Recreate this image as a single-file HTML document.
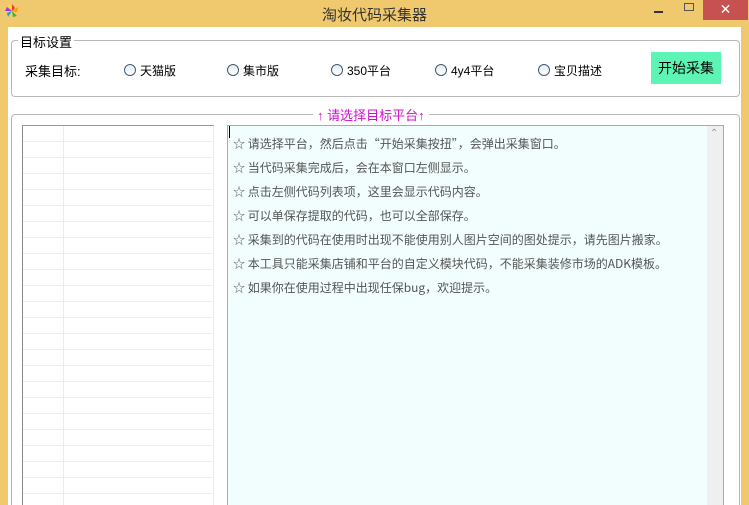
<!DOCTYPE html>
<html><head><meta charset="utf-8"><style>
*{margin:0;padding:0;box-sizing:border-box}
html,body{width:749px;height:505px;overflow:hidden}
body{background:#f0c86e;font-family:"Liberation Sans","Noto Sans CJK SC",sans-serif;font-size:13px;color:#000;position:relative}
.a{position:absolute}
.client{left:8px;top:27px;width:733px;height:478px;background:#fff}
.grp{border:1px solid #b8b8b8;border-radius:4px}
.radio{width:12px;height:12px;border:1px solid #3c5a78;border-radius:50%;background:linear-gradient(#e8ecef,#fff)}
.rl{font-size:12px;top:62px}
.row{left:23px;width:190px;height:1px;background:#ececec}
.tl{left:233px;font-size:12px;color:#555;font-family:"Noto Sans CJK SC","Liberation Sans",sans-serif;line-height:16px;white-space:nowrap}
</style></head><body>
<div class="a" style="left:4px;top:3px;width:16px;height:16px">
<svg width="16" height="16" viewBox="0 0 16 16"><path d="M8 8L8 1 11 5z" fill="#e33"/><path d="M8 8L14 4 13 9z" fill="#f90"/><path d="M8 8L13 13 9 14z" fill="#3b3"/><path d="M8 8L4 14 3 10z" fill="#29d"/><path d="M8 8L1 8 3 4z" fill="#a3d"/><path d="M8 8L3 2 7 2z" fill="#fd2"/></svg></div>
<div class="a" style="left:0;top:4px;width:749px;text-align:center;font-size:15px;color:#333">淘妆代码采集器</div>
<div class="a" style="left:654px;top:11px;width:9px;height:2px;background:#333"></div>
<div class="a" style="left:684px;top:3px;width:10px;height:8px;border:1px solid #555"></div>
<div class="a" style="left:703px;top:0;width:45px;height:20px;background:#c75050;color:#fff;text-align:center;font-size:14px;line-height:19px">✕</div>
<div class="a client"></div>
<div class="a grp" style="left:11px;top:40px;width:729px;height:57px"></div>
<div class="a" style="left:18px;top:32px;background:#fff;padding:0 2px;font-size:13px">目标设置</div>
<div class="a" style="left:25px;top:61px;font-size:13px">采集目标:</div>
<div class="a radio" style="left:124px;top:64px"></div><div class="a rl" style="left:140px">天猫版</div>
<div class="a radio" style="left:227px;top:64px"></div><div class="a rl" style="left:243px">集市版</div>
<div class="a radio" style="left:331px;top:64px"></div><div class="a rl" style="left:347px">350平台</div>
<div class="a radio" style="left:435px;top:64px"></div><div class="a rl" style="left:451px">4y4平台</div>
<div class="a radio" style="left:538px;top:64px"></div><div class="a rl" style="left:554px">宝贝描述</div>
<div class="a" style="left:651px;top:52px;width:70px;height:32px;background:#5cf5b5;font-size:14px;line-height:32px;text-align:center">开始采集</div>
<div class="a grp" style="left:11px;top:114px;width:729px;height:400px"></div>
<div class="a" style="left:313px;top:105px;background:#fff;padding:0 4px;color:#d010d0;font-size:13px">↑ 请选择目标平台↑</div>
<div class="a" style="left:22px;top:125px;width:192px;height:380px;border-left:1px solid #8a8a8a;border-top:1px solid #9a9a9a;background:#fff"></div>
<div class="a" style="left:63px;top:126px;width:1px;height:379px;background:#ececec"></div>
<div class="a" style="left:213px;top:126px;width:1px;height:379px;background:#ececec"></div>
<div class="a row" style="top:141px"></div><div class="a row" style="top:157px"></div><div class="a row" style="top:173px"></div><div class="a row" style="top:189px"></div><div class="a row" style="top:205px"></div><div class="a row" style="top:221px"></div><div class="a row" style="top:237px"></div><div class="a row" style="top:253px"></div><div class="a row" style="top:269px"></div><div class="a row" style="top:285px"></div><div class="a row" style="top:301px"></div><div class="a row" style="top:317px"></div><div class="a row" style="top:333px"></div><div class="a row" style="top:349px"></div><div class="a row" style="top:365px"></div><div class="a row" style="top:381px"></div><div class="a row" style="top:397px"></div><div class="a row" style="top:413px"></div><div class="a row" style="top:429px"></div><div class="a row" style="top:445px"></div><div class="a row" style="top:461px"></div><div class="a row" style="top:477px"></div><div class="a row" style="top:493px"></div>
<div class="a" style="left:227px;top:125px;width:497px;height:390px;border:1px solid #a8b088;background:#f2fefe"></div>
<div class="a" style="left:707px;top:126px;width:16px;height:379px;background:#efefef"></div>
<div class="a" style="left:710px;top:128px;font-size:10px;color:#999">⌃</div>
<div class="a" style="left:229px;top:126px;width:1px;height:12px;background:#000"></div>
<div class="a tl" style="top:136px">☆ 请选择平台，然后点击“开始采集按扭”，会弹出采集窗口。</div>
<div class="a tl" style="top:160px">☆ 当代码采集完成后，会在本窗口左侧显示。</div>
<div class="a tl" style="top:184px">☆ 点击左侧代码列表项，这里会显示代码内容。</div>
<div class="a tl" style="top:208px">☆ 可以单保存提取的代码，也可以全部保存。</div>
<div class="a tl" style="top:232px">☆ 采集到的代码在使用时出现不能使用别人图片空间的图处提示，请先图片搬家。</div>
<div class="a tl" style="top:256px">☆ 本工具只能采集店铺和平台的自定义模块代码，不能采集装修市场的ADK模板。</div>
<div class="a tl" style="top:280px">☆ 如果你在使用过程中出现任保bug，欢迎提示。</div>
</body></html>
